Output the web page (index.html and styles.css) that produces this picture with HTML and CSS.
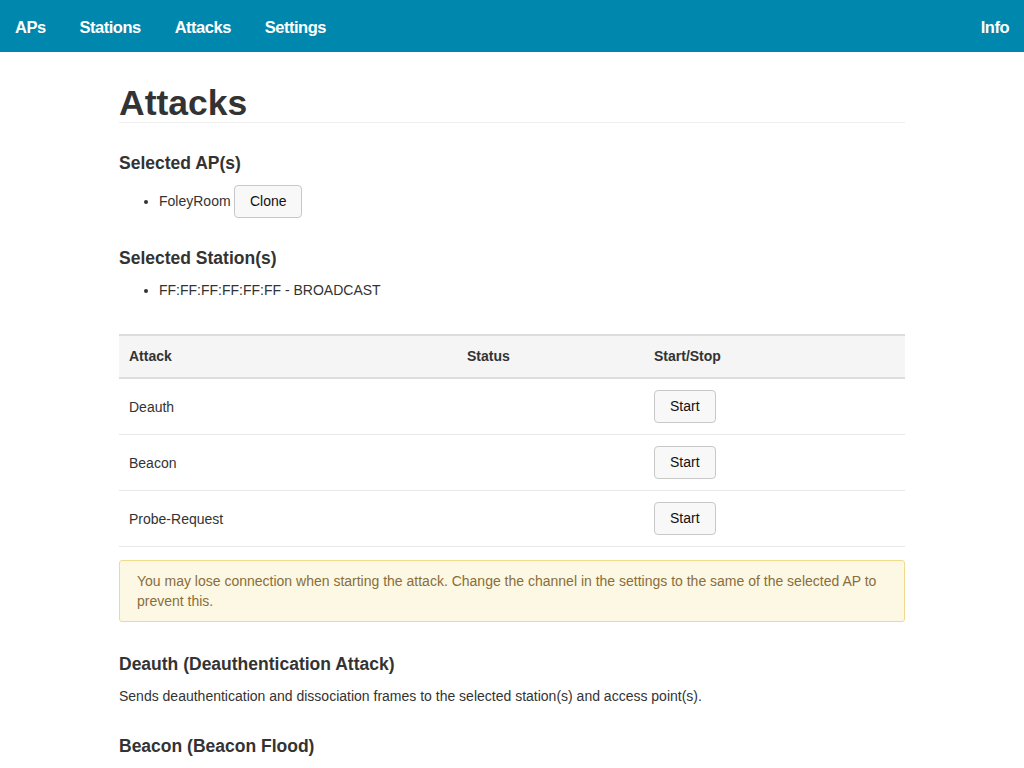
FILE: index.html
```html
<!DOCTYPE html>
<html lang="en">
<head>
<meta charset="utf-8">
<title>Attacks</title>
<link rel="stylesheet" href="styles.css">
</head>
<body>
<nav class="navbar">
  <div class="nav-left">
    <a class="nav-link" href="#">APs</a>
    <a class="nav-link" href="#">Stations</a>
    <a class="nav-link" href="#">Attacks</a>
    <a class="nav-link" href="#">Settings</a>
  </div>
  <a class="nav-link" href="#">Info</a>
</nav>
<main class="container">
  <h1 class="page-title">Attacks</h1>

  <h3 class="section-title">Selected AP(s)</h3>
  <ul class="list">
    <li>FoleyRoom <button class="btn">Clone</button></li>
  </ul>

  <h3 class="section-title">Selected Station(s)</h3>
  <ul class="list">
    <li>FF:FF:FF:FF:FF:FF - BROADCAST</li>
  </ul>

  <table class="table">
    <colgroup>
      <col class="col-attack">
      <col class="col-status">
      <col class="col-action">
    </colgroup>
    <thead>
      <tr><th>Attack</th><th>Status</th><th>Start/Stop</th></tr>
    </thead>
    <tbody>
      <tr><td>Deauth</td><td></td><td><button class="btn btn-table">Start</button></td></tr>
      <tr><td>Beacon</td><td></td><td><button class="btn btn-table">Start</button></td></tr>
      <tr><td>Probe-Request</td><td></td><td><button class="btn btn-table">Start</button></td></tr>
    </tbody>
  </table>

  <div class="alert">You may lose connection when starting the attack. Change the channel in the settings to the same of the selected AP to prevent this.</div>

  <h3 class="section-title section-gap">Deauth (Deauthentication Attack)</h3>
  <p class="desc">Sends deauthentication and dissociation frames to the selected station(s) and access point(s).</p>

  <h3 class="section-title">Beacon (Beacon Flood)</h3>
</main>
</body>
</html>
```
FILE: styles.css
```css
html, body {
  margin: 0;
  padding: 0;
}
body {
  font-family: "Liberation Sans", Arial, Helvetica, sans-serif;
  font-size: 14px;
  line-height: 20px;
  color: #333;
  background: #fff;
}
.navbar {
  box-sizing: border-box;
  height: 52px;
  padding: 2px 15px 0 15px;
  background: #0087ad;
  display: flex;
  align-items: center;
  justify-content: space-between;
}
.nav-left {
  display: flex;
  gap: 34px;
}
.nav-link {
  color: #fff;
  text-decoration: none;
  font-weight: bold;
  font-size: 16.5px;
  letter-spacing: -0.5px;
}
.container {
  width: 786px;
  margin: 0 auto;
}
.page-title {
  margin: 32px 0 0 0;
  font-size: 35.5px;
  line-height: 38px;
  font-weight: bold;
  border-bottom: 1px solid #eee;
}
.section-title {
  margin: 30px 0 12px 0;
  font-size: 17.5px;
  line-height: 20px;
  font-weight: bold;
}
.section-gap {
  margin-top: 32px;
}
.list {
  margin: 0;
  padding-left: 40px;
}
.btn {
  box-sizing: border-box;
  height: 33px;
  padding: 0 14.5px;
  font-family: "Liberation Sans", Arial, Helvetica, sans-serif;
  font-size: 14px;
  line-height: 31px;
  color: #111;
  background: #f8f8f8;
  border: 1px solid #c8c8c8;
  border-radius: 4px;
  vertical-align: baseline;
}
.btn-table {
  display: block;
  padding: 0 15px;
}
.table {
  width: 100%;
  margin-top: 34px;
  border-collapse: collapse;
  table-layout: fixed;
  border-top: 2px solid #ddd;
}
.col-attack { width: 338px; }
.col-status { width: 187px; }
.col-action { width: 261px; }
.table th {
  text-align: left;
  font-weight: bold;
  padding: 10px;
  line-height: 21px;
  background: #f5f5f5;
  border-bottom: 2px solid #ddd;
}
.table td {
  padding: 11px 10px;
  vertical-align: middle;
  border-bottom: 1px solid #e8e8e8;
}
.alert {
  margin-top: 13px;
  padding: 10px 17px;
  background: #fcf8e3;
  border: 1px solid #f0da8e;
  border-radius: 3px;
  color: #8a6d3b;
}
.desc {
  margin: 0 0 30px 0;
}
```
